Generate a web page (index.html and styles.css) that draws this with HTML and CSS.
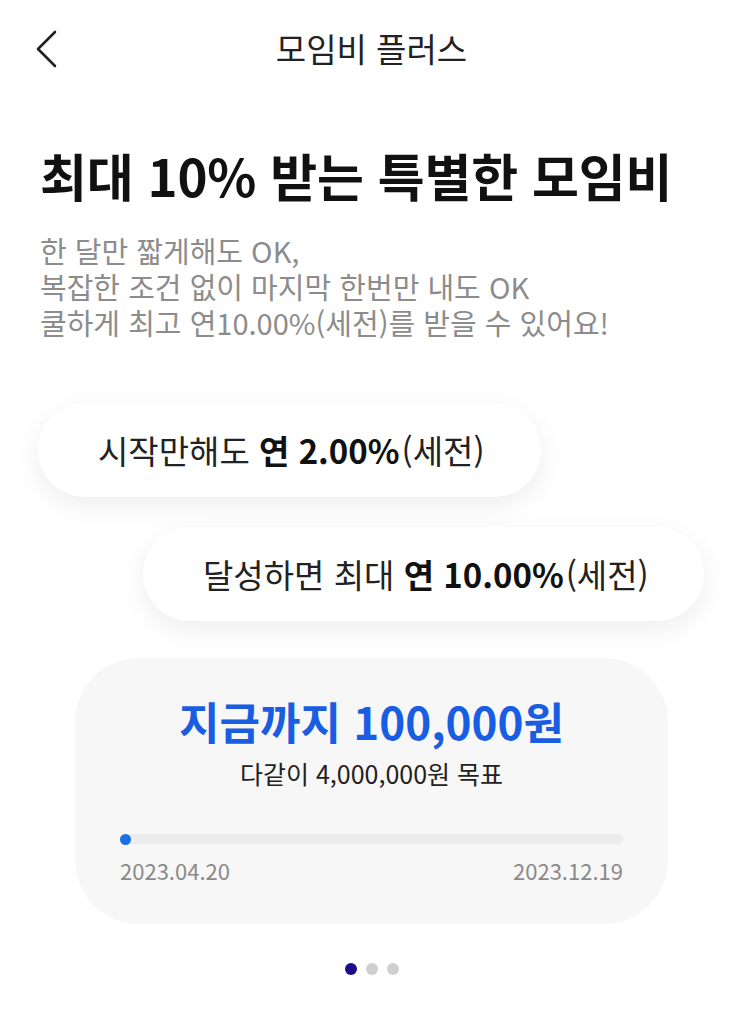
FILE: index.html
```html
<!DOCTYPE html>
<html lang="ko">
  <head>
    <meta charset="utf-8">
    <link rel="stylesheet" href="styles.css">
  </head>
  <body>
    <div class="page">
      <header class="top-bar">
        <button class="back" aria-label="뒤로">
          <svg width="26" height="40" viewBox="0 0 26 40">
            <path d="M21 3 L4 20 L21 37" fill="none" stroke="#222" stroke-width="2.6" stroke-linecap="round" stroke-linejoin="round" />
          </svg>
        </button>
        <h1 class="title">모임비 플러스</h1>
      </header>

      <section class="intro">
        <h2 class="headline">최대 10% 받는 특별한 모임비</h2>
        <p class="desc">
          <span class="line">한 달만 짧게해도 OK,</span>
          <span class="line">복잡한 조건 없이 마지막 한번만 내도 OK</span>
          <span class="line">쿨하게 최고 연10.00%(세전)를 받을 수 있어요!</span>
        </p>
      </section>

      <div class="bubbles">
        <div class="bubble bubble-left">
          <span>시작만해도 <b>연 2.00%</b>(세전)</span>
        </div>
        <div class="bubble bubble-right">
          <span>달성하면 최대 <b>연 10.00%</b>(세전)</span>
        </div>
      </div>

      <div class="goal-card">
        <div class="goal-amount">지금까지 100,000원</div>
        <div class="goal-target">다같이 4,000,000원 목표</div>
        <div class="progress">
          <div class="progress-fill" style="width: 2.2%"></div>
        </div>
        <div class="dates">
          <span>2023.04.20</span>
          <span>2023.12.19</span>
        </div>
      </div>

      <div class="pager">
        <span class="dot active"></span>
        <span class="dot"></span>
        <span class="dot"></span>
      </div>
    </div>
  </body>
</html>
```

FILE: styles.css
```css
body {
  margin: 0;
  background: #fff;
  color: #111;
  font-family: "Noto Sans CJK KR", "Noto Sans", sans-serif;
}
.page {
  width: 743px;
  height: 1025px;
  overflow: hidden;
}
.top-bar {
  position: relative;
  height: 100px;
  display: flex;
  align-items: center;
  justify-content: center;
}
.back {
  position: absolute;
  left: 34px;
  top: 29px;
  padding: 0;
  border: 0;
  background: none;
}
.title {
  margin: 0 0 4px;
  font-size: 33px;
  font-weight: 400;
  color: #222;
}
.intro {
  padding: 45px 40px 0;
}
.headline {
  margin: 0;
  font-size: 51px;
  font-weight: 700;
  line-height: 60px;
  letter-spacing: -0.2px;
  color: #111;
}
.desc {
  display: flex;
  flex-direction: column;
  margin: 27px 0 0;
  font-size: 29px;
  line-height: 36px;
  color: #8c8c8c;
}
.desc .line {
  display: block;
  height: 36px;
}
.bubbles {
  display: flex;
  flex-direction: column;
  gap: 30px;
  margin-top: 63px;
}
.bubble {
  height: 94px;
  display: flex;
  align-items: center;
  background: #fff;
  border-radius: 47px;
  box-shadow: 0 8px 28px rgba(0, 0, 0, 0.07);
  font-size: 33px;
  color: #222;
  white-space: nowrap;
}
.bubble b {
  font-weight: 700;
  color: #111;
  margin-right: 2px;
}
.bubble-left {
  margin-left: 38px;
  width: 503px;
  padding-left: 60px;
  box-sizing: border-box;
}
.bubble-right {
  margin-left: 143px;
  width: 561px;
  padding-left: 60px;
  box-sizing: border-box;
}
.goal-card {
  margin: 37px 75px 0;
  height: 266px;
  box-sizing: border-box;
  padding: 35px 45px 0;
  background: #f7f7f7;
  border-radius: 64px;
  text-align: center;
}
.goal-amount {
  font-size: 44px;
  font-weight: 700;
  line-height: 56px;
  color: #195ee2;
}
.goal-target {
  margin-top: 6px;
  font-size: 25px;
  line-height: 36px;
  color: #222;
}
.progress {
  margin-top: 43px;
  height: 10px;
  border-radius: 5px;
  background: #ececec;
}
.progress-fill {
  min-width: 11px;
  height: 11px;
  margin-top: -0.5px;
  border-radius: 6px;
  background: #1a6fe8;
}
.dates {
  display: flex;
  justify-content: space-between;
  margin-top: 11px;
  font-size: 22px;
  line-height: 30px;
  color: #8a8a8a;
}
.pager {
  display: flex;
  justify-content: center;
  gap: 9px;
  margin-top: 39px;
}
.dot {
  width: 12px;
  height: 12px;
  border-radius: 50%;
  background: #cfcfcf;
}
.dot.active {
  background: #190d8c;
}
```
